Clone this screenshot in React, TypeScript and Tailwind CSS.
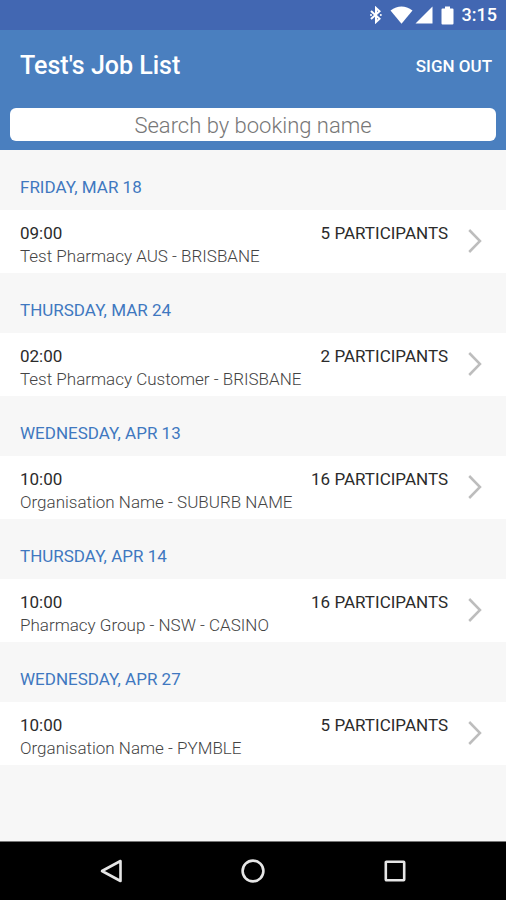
type Job = {
  date: string;
  time: string;
  name: string;
  participants: number;
};

const jobs: Job[] = [
  { date: "FRIDAY, MAR 18", time: "09:00", name: "Test Pharmacy AUS - BRISBANE", participants: 5 },
  { date: "THURSDAY, MAR 24", time: "02:00", name: "Test Pharmacy Customer - BRISBANE", participants: 2 },
  { date: "WEDNESDAY, APR 13", time: "10:00", name: "Organisation Name - SUBURB NAME", participants: 16 },
  { date: "THURSDAY, APR 14", time: "10:00", name: "Pharmacy Group - NSW - CASINO", participants: 16 },
  { date: "WEDNESDAY, APR 27", time: "10:00", name: "Organisation Name - PYMBLE", participants: 5 },
];

function StatusBar() {
  return (
    <div className="flex h-[30px] items-center justify-end bg-[#4267b2] pr-[9px] text-white">
      <svg className="mr-2 h-[18px] w-3" viewBox="0 0 12 18" fill="none" stroke="currentColor" strokeWidth="2" aria-hidden="true">
        <path d="M1 5 L9.5 12.8 L6 16 V2 L9.5 5.2 L1 13" />
        <circle cx="1" cy="9" r="1" fill="currentColor" stroke="none" />
        <circle cx="10.8" cy="9" r="1" fill="currentColor" stroke="none" />
      </svg>
      <svg className="h-[18px] w-[23px]" viewBox="0 0 23 18" fill="currentColor" aria-hidden="true">
        <path d="M0.5 4.5 Q11.5 -3.5 22.5 4.5 L11.5 17.8 Z" />
      </svg>
      <svg className="ml-0.5 h-[18px] w-[18px]" viewBox="0 0 18 18" fill="currentColor" aria-hidden="true">
        <path d="M17.5 0.5 V17.5 H0.5 Z" />
      </svg>
      <svg className="ml-2 h-[19px] w-[13px]" viewBox="0 0 13 19" fill="currentColor" aria-hidden="true">
        <path d="M4 0.5 H9 V2.5 H11.5 Q12.5 2.5 12.5 3.5 V17.5 Q12.5 18.5 11.5 18.5 H1.5 Q0.5 18.5 0.5 17.5 V3.5 Q0.5 2.5 1.5 2.5 H4 Z" />
      </svg>
      <span className="ml-2 text-lg leading-6 font-medium">3:15</span>
    </div>
  );
}

function JobSection({ job }: { job: Job }) {
  return (
    <section>
      <h2 className="flex h-[60px] items-center px-5 pt-3.5 text-[17px] leading-6 text-[#3f78c0]">{job.date}</h2>
      <a href="#job" className="flex items-center bg-white pt-[11px] pr-6 pb-1.5 pl-5">
        <div className="min-w-0 flex-1">
          <div className="flex justify-between text-[17px] leading-6 text-[#2b2b2b]">
            <span>{job.time}</span>
            <span>{job.participants} PARTICIPANTS</span>
          </div>
          <p className="text-[17px] leading-[22px] font-light text-[#444444]">{job.name}</p>
        </div>
        <svg className="mb-1.5 ml-5 h-6 w-[14px]" viewBox="0 0 14 24" fill="none" stroke="#bdbdbd" strokeWidth="2.5" aria-hidden="true">
          <path d="M1.2 1 L12 12 L1.2 23" />
        </svg>
      </a>
    </section>
  );
}

function NavigationBar() {
  return (
    <nav className="flex h-[59px] justify-center border-t border-[#777777] bg-black text-[#e6e6e6]">
      <button type="button" aria-label="Back" className="flex w-[142px] items-center justify-center">
        <svg className="h-6 w-6" viewBox="0 0 24 24" fill="none" stroke="currentColor" strokeWidth="2.6" strokeLinejoin="round" aria-hidden="true">
          <path d="M21.5 2 V22 L3 12 Z" />
        </svg>
      </button>
      <button type="button" aria-label="Home" className="flex w-[142px] items-center justify-center">
        <svg className="h-6 w-6" viewBox="0 0 24 24" fill="none" stroke="currentColor" strokeWidth="2.6" aria-hidden="true">
          <circle cx="12" cy="12" r="10.4" />
        </svg>
      </button>
      <button type="button" aria-label="Recent apps" className="flex w-[142px] items-center justify-center">
        <svg className="h-6 w-6" viewBox="0 0 24 24" fill="none" stroke="currentColor" strokeWidth="2.6" aria-hidden="true">
          <rect x="2.8" y="2.8" width="18.4" height="18.4" rx="0.6" />
        </svg>
      </button>
    </nav>
  );
}

export default function App() {
  return (
    <div className="flex min-h-screen flex-col bg-[#f7f7f7] font-[Roboto,sans-serif]">
      <StatusBar />
      <header className="bg-[#4a7fbf] px-2.5 pb-[9px]">
        <div className="flex h-[78px] items-center justify-between pr-1 pb-1.5 pl-2.5 text-white">
          <h1 className="text-[25px] leading-8 font-medium">Test's Job List</h1>
          <button type="button" className="text-[17px] leading-6 font-medium">SIGN OUT</button>
        </div>
        <input
          type="text"
          aria-label="Search by booking name"
          placeholder="Search by booking name"
          className="block h-[33px] w-full rounded-md bg-white px-3 pt-0.5 text-center text-[22px] leading-8 font-light text-[#333333] placeholder:text-[#777777]"
        />
      </header>
      <main className="flex-1">
        {jobs.map((job) => (
          <JobSection key={job.date} job={job} />
        ))}
      </main>
      <NavigationBar />
    </div>
  );
}
